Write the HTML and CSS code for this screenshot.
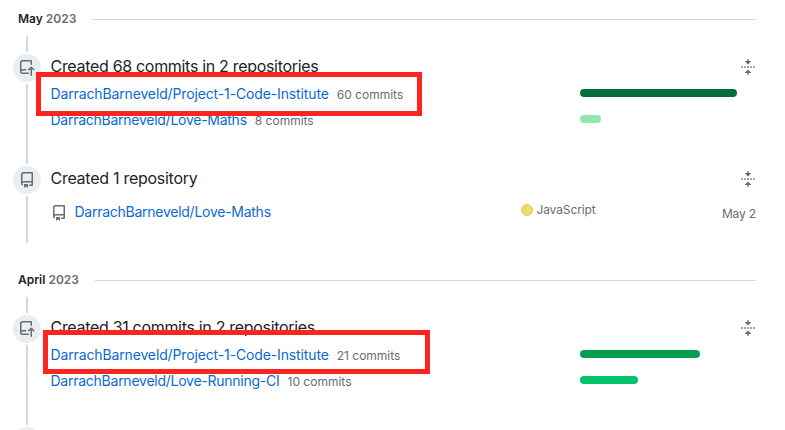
FILE: index.html
```
<!DOCTYPE html>
<html lang="en">
<head>
<meta charset="utf-8">
<title>Contribution activity</title>
<link rel="stylesheet" href="styles.css">
</head>
<body>
<svg class="sprite" aria-hidden="true">
  <symbol id="push" viewBox="0 0 16 16"><path d="M1 2.5A2.5 2.5 0 0 1 3.5 0h8.75a.75.75 0 0 1 .75.75v3.5a.75.75 0 0 1-1.5 0V1.5h-8a1 1 0 0 0-1 1v6.708A2.493 2.493 0 0 1 3.5 9h3.25a.75.75 0 0 1 0 1.5H3.5a1 1 0 0 0 0 2h5.75a.75.75 0 0 1 0 1.5H3.5A2.5 2.5 0 0 1 1 11.5Zm13.23 7.79-1.24-1.23v6.19a.75.75 0 0 1-1.5 0V9.06l-1.24 1.23a.75.75 0 0 1-1.06-1.06l2.52-2.51a.75.75 0 0 1 1.06 0l2.52 2.51a.75.75 0 0 1-1.06 1.06Z"/></symbol>
  <symbol id="repo" viewBox="0 0 16 16"><path d="M2 2.5A2.5 2.5 0 0 1 4.5 0h8.75a.75.75 0 0 1 .75.75v12.5a.75.75 0 0 1-.75.75h-2.5a.75.75 0 0 1 0-1.5h1.75v-2h-8a1 1 0 0 0-.714 1.7.75.75 0 1 1-1.072 1.05A2.495 2.495 0 0 1 2 11.5Zm10.5-1h-8a1 1 0 0 0-1 1v6.708A2.486 2.486 0 0 1 4.5 9h8ZM5 12.25a.25.25 0 0 1 .25-.25h3.5a.25.25 0 0 1 .25.25v3.25a.25.25 0 0 1-.4.2l-1.45-1.087a.249.249 0 0 0-.3 0L5.4 15.7a.25.25 0 0 1-.4-.2Z"/></symbol>
  <symbol id="fold" viewBox="0 0 16 16"><path d="M10.896 2H8.75V.75a.75.75 0 0 0-1.5 0V2H5.104a.25.25 0 0 0-.177.427l2.896 2.896a.25.25 0 0 0 .354 0l2.896-2.896A.25.25 0 0 0 10.896 2ZM8.75 15.25a.75.75 0 0 1-1.5 0V14H5.104a.25.25 0 0 1-.177-.427l2.896-2.896a.25.25 0 0 1 .354 0l2.896 2.896a.25.25 0 0 1-.177.427H8.75ZM1.75 7.25h.5a.75.75 0 0 1 0 1.5h-.5a.75.75 0 0 1 0-1.5Zm3 0h.5a.75.75 0 0 1 0 1.5h-.5a.75.75 0 0 1 0-1.5Zm3 0h.5a.75.75 0 0 1 0 1.5h-.5a.75.75 0 0 1 0-1.5Zm3 0h.5a.75.75 0 0 1 0 1.5h-.5a.75.75 0 0 1 0-1.5Zm3 0h.5a.75.75 0 0 1 0 1.5h-.5a.75.75 0 0 1 0-1.5Z"/></symbol>
</svg>
<main class="activity">
  <section class="month may">
    <h3 class="month-title"><span class="label">May <span class="year">2023</span></span></h3>
    <div class="item">
      <div class="rail"><span class="badge"><svg class="icon"><use href="#push"/></svg></span></div>
      <div class="body">
        <div class="summary"><span class="title t1">Created 68 commits in 2 repositories</span><svg class="icon fold"><use href="#fold"/></svg></div>
        <div class="row highlighted first"><a class="link l1">DarrachBarneveld/Project-1-Code-Institute</a><span class="count">60 commits</span><span class="track"><span class="bar b1"></span></span></div>
        <div class="row"><a class="link l2">DarrachBarneveld/Love-Maths</a><span class="count">8 commits</span><span class="track"><span class="bar b2"></span></span></div>
      </div>
    </div>
    <div class="item short">
      <div class="rail"><span class="badge"><svg class="icon"><use href="#repo"/></svg></span></div>
      <div class="body">
        <div class="summary"><span class="title t2">Created 1 repository</span><svg class="icon fold"><use href="#fold"/></svg></div>
        <div class="created"><svg class="icon"><use href="#repo"/></svg><a class="link l2">DarrachBarneveld/Love-Maths</a><span class="language"><span class="dot"></span>JavaScript</span><span class="date">May 2</span></div>
      </div>
    </div>
  </section>
  <section class="month april">
    <h3 class="month-title"><span class="label">April <span class="year">2023</span></span></h3>
    <div class="item">
      <div class="rail"><span class="badge"><svg class="icon"><use href="#push"/></svg></span></div>
      <div class="body">
        <div class="summary"><span class="title t1">Created 31 commits in 2 repositories</span><svg class="icon fold"><use href="#fold"/></svg></div>
        <div class="row highlighted second"><a class="link l1">DarrachBarneveld/Project-1-Code-Institute</a><span class="count">21 commits</span><span class="track"><span class="bar b3"></span></span></div>
        <div class="row"><a class="link l3">DarrachBarneveld/Love-Running-CI</a><span class="count">10 commits</span><span class="track"><span class="bar b4"></span></span></div>
      </div>
    </div>
    <div class="item">
      <div class="rail"><span class="badge"></span></div>
    </div>
  </section>
</main>
</body>
</html>
```
FILE: styles.css
```
*, *::after { box-sizing: border-box; }
body { margin: 0; height: 430px; overflow: hidden; background: #fff; color: #1f2328; font-family: Inter, "Liberation Sans", sans-serif; }
.sprite { display: none; }
.activity { width: 756px; height: 430px; overflow: hidden; padding-left: 11px; }
.month-title { display: flex; align-items: center; gap: 16px; height: 20px; margin: 0 0 0 7px; font-size: 12px; font-weight: 600; line-height: 20px; }
.month-title::after { content: ""; flex: 1; height: 1px; background: #d5d9dd; }
.may { padding-top: 9px; height: 243px; }
.may .month-title { margin-bottom: 7px; }
.april { padding-top: 27px; }
.april .month-title { margin-bottom: 7px; }
.year { color: #656d76; }
.item { display: flex; height: 112px; }
.item.short { height: 95px; }
.rail { width: 32px; padding-top: 16px; background: linear-gradient(#d5d9dd, #d5d9dd) 15px 0 / 2px 100% no-repeat; }
.badge { display: flex; align-items: center; justify-content: center; width: 32px; height: 32px; border: 2px solid #fff; border-radius: 50%; background: #ebeef1; }
.icon { display: block; flex: none; width: 16px; height: 16px; fill: #656d76; }
.body { flex: 1; padding: 18px 0 0 7.5px; }
.summary { display: flex; justify-content: space-between; align-items: center; height: 26px; }
.title { margin-top: -2px; font-size: 16px; line-height: 24px; white-space: nowrap; }
.t1 { letter-spacing: -0.31px; }
.t2 { letter-spacing: -0.27px; }
.row { position: relative; display: flex; align-items: center; height: 26px; margin-top: 1px; }
.row + .row { margin-top: 0; }
.link { color: #0a6ad2; font-size: 14px; line-height: 20px; white-space: nowrap; }
.l1 { letter-spacing: -0.135px; }
.l2 { letter-spacing: -0.26px; }
.l3 { letter-spacing: -0.25px; }
.count { margin: 2px 0 0 8px; color: #656d76; font-size: 12px; line-height: 18px; white-space: nowrap; }
.track { width: 176px; height: 8px; margin: -2px 0 0 auto; }
.bar { display: block; height: 8px; border-radius: 4px; }
.b1 { width: 157px; background: #046d3e; }
.b2 { width: 21px; background: #94e6ae; }
.b3 { width: 120px; background: #02a050; }
.b4 { width: 58px; background: #05c46b; }
.highlighted::after { content: ""; position: absolute; z-index: 1; border: 5px solid #fd2420; }
.first::after { left: -14.5px; top: -9px; width: 386px; height: 44px; }
.second::after { left: -7.5px; top: -12px; width: 386.5px; height: 44px; }
.created { display: flex; align-items: center; height: 26px; margin-top: 7px; }
.created .icon { margin-top: 1px; }
.created .link { margin-left: 8px; }
.language { display: flex; align-items: center; width: 201px; margin: -5px 0 0 auto; color: #656d76; font-size: 12px; line-height: 18px; letter-spacing: -0.1px; }
.dot { width: 12px; height: 12px; margin-right: 3.5px; border: 1px solid #e0cb62; border-radius: 50%; background: #f1d967; }
.date { color: #656d76; font-size: 12px; line-height: 18px; letter-spacing: -0.15px; margin-top: 3px; }
```
